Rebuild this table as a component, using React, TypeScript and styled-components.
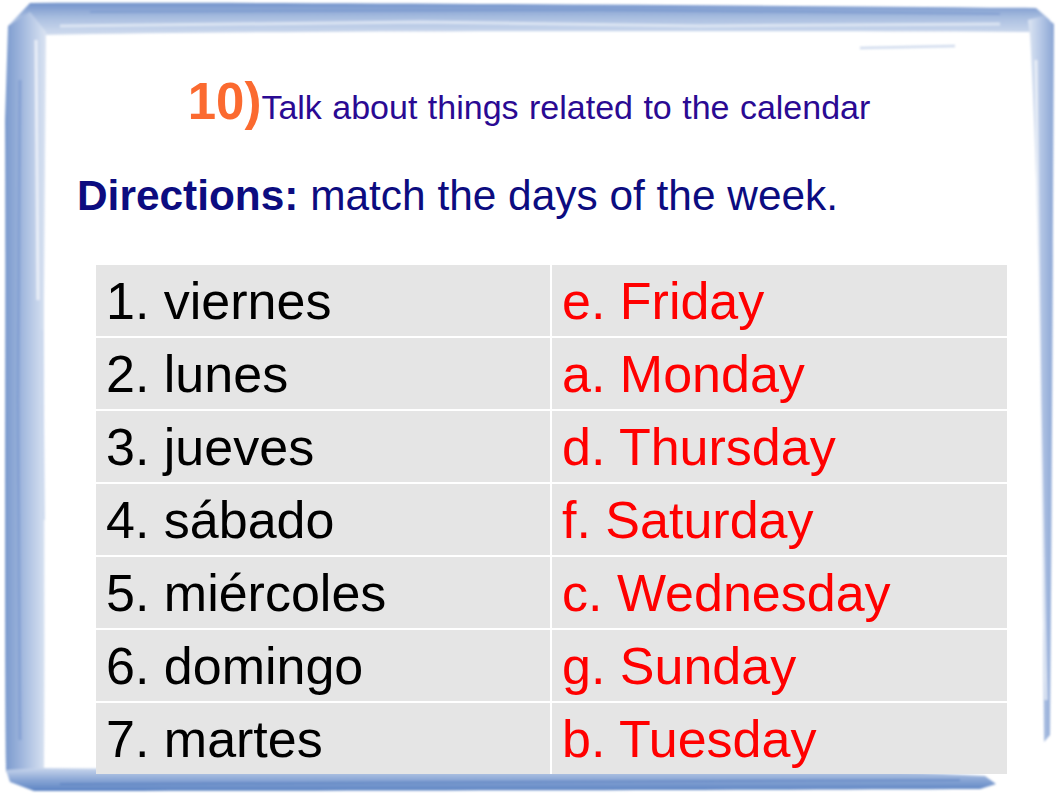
import React from "react";
import styled, { createGlobalStyle } from "styled-components";

const Global = createGlobalStyle`
  html, body { margin: 0; padding: 0; background: #ffffff; }
  body { font-family: "Liberation Sans", Arial, sans-serif; }
`;

const Slide = styled.div`
  position: relative;
  width: 1058px;
  height: 793px;
  overflow: hidden;
  background: #ffffff;
`;

const FrameArt = styled.svg`
  position: absolute;
  inset: 0;
  width: 1058px;
  height: 793px;
  pointer-events: none;
`;

const Content = styled.div`
  position: relative;
  display: flex;
  flex-direction: column;
  padding-top: 77px;
`;

const Title = styled.h1`
  margin: 0;
  height: 50px;
  display: flex;
  justify-content: center;
  align-items: baseline;
  font-weight: normal;
  line-height: 50px;
`;

const Number = styled.span`
  font-size: 51px;
  font-weight: bold;
  color: #fb6a30;
`;

const Topic = styled.span`
  font-size: 34px;
  color: #2a0a93;
  word-spacing: 1px;
`;

const Directions = styled.p`
  margin: 48px 0 0 77px;
  font-size: 42.4px;
  line-height: 42px;
  height: 42px;
  color: #0c0c80;
  white-space: nowrap;
`;

const Label = styled.b`
  font-weight: bold;
`;

const Table = styled.div`
  margin: 48px 0 0 96px;
  width: 911px;
  display: grid;
  grid-template-columns: 454px 455px;
  grid-auto-rows: 71px;
  gap: 2px;
  background: #ffffff;
`;

const Cell = styled.div<{ $answer?: boolean }>`
  background: #e5e5e5;
  font-size: 52px;
  line-height: 71px;
  padding: 1px 0 0 10px;
  color: ${(p) => (p.$answer ? "#ff0000" : "#000000")};
  white-space: nowrap;
  box-sizing: border-box;
`;

const rows: [string, string][] = [
  ["1. viernes", "e. Friday"],
  ["2. lunes", "a. Monday"],
  ["3. jueves", "d. Thursday"],
  ["4. sábado", "f. Saturday"],
  ["5. miércoles", "c. Wednesday"],
  ["6. domingo", "g. Sunday"],
  ["7. martes", "b. Tuesday"],
];

function Frame() {
  return (
    <FrameArt viewBox="0 0 1058 793">
      <defs>
        <linearGradient id="gTop" x1="0" y1="0" x2="0" y2="1">
          <stop offset="0" stopColor="#7393cb" />
          <stop offset="0.45" stopColor="#a9bee0" />
          <stop offset="1" stopColor="#d3deef" />
        </linearGradient>
        <linearGradient id="gLeft" x1="0" y1="0" x2="1" y2="0">
          <stop offset="0" stopColor="#7a99cd" />
          <stop offset="0.4" stopColor="#9fb6dd" />
          <stop offset="1" stopColor="#dbe4f2" />
        </linearGradient>
        <linearGradient id="gBottom" x1="0" y1="0" x2="0" y2="1">
          <stop offset="0" stopColor="#c9d6ec" />
          <stop offset="0.5" stopColor="#8ca8d6" />
          <stop offset="1" stopColor="#5b82c2" />
        </linearGradient>
        <linearGradient id="gRight" x1="0" y1="0" x2="1" y2="0">
          <stop offset="0" stopColor="#dde6f3" />
          <stop offset="0.5" stopColor="#b4c6e5" />
          <stop offset="1" stopColor="#8aa5d4" />
        </linearGradient>
        <filter id="soft" x="-5%" y="-5%" width="110%" height="110%">
          <feGaussianBlur stdDeviation="0.8" />
        </filter>
      </defs>
      <g filter="url(#soft)">
        <path
          d="M30 3 C300 2 700 5 1036 8 L1050 20 L1044 34 L1030 32 C700 31 300 30 44 35 L26 36 L8 26 Z"
          fill="url(#gTop)"
        />
        <path
          d="M8 26 L30 12 L46 32 L44 300 C44 500 45 650 44 770 L30 776 L6 772 C4 600 6 300 5 120 Z"
          fill="url(#gLeft)"
        />
        <path
          d="M6 770 L44 768 C300 771 700 771 900 772 L985 776 L996 784 L980 789 C700 790 300 791 34 791 L10 782 Z"
          fill="url(#gBottom)"
        />
        <path
          d="M1028 20 L1044 16 L1054 24 C1053 200 1052 500 1050 735 L1044 742 C1042 500 1040 200 1030 36 Z"
          fill="url(#gRight)"
        />
        <path d="M60 26 L420 22 L700 26 L1000 24" stroke="#e4ebf6" strokeWidth="3" fill="none" opacity="0.8" />
        <path d="M90 12 L600 10 L1000 14" stroke="#6d8fc9" strokeWidth="2" fill="none" opacity="0.5" />
        <path d="M20 80 L18 400 L20 740" stroke="#6d8fc9" strokeWidth="3" fill="none" opacity="0.45" />
        <path d="M36 40 L38 300" stroke="#f2f5fb" strokeWidth="3" fill="none" opacity="0.8" />
        <path d="M42 330 L44 520" stroke="#c8d5ec" strokeWidth="2" fill="none" opacity="0.7" />
        <path d="M860 48 L955 46" stroke="#c6d3ea" strokeWidth="2.5" fill="none" opacity="0.8" />
        <path d="M1036 60 L1040 400 L1046 700" stroke="#ffffff" strokeWidth="3" fill="none" opacity="0.6" />
        <path d="M60 784 L500 782 L960 780" stroke="#4f78bb" strokeWidth="2" fill="none" opacity="0.5" />
      </g>
    </FrameArt>
  );
}

export default function App() {
  return (
    <>
      <Global />
      <Slide>
        <Frame />
        <Content>
          <Title>
            <Number>10)</Number>
            <Topic>Talk about things related to the calendar</Topic>
          </Title>
          <Directions>
            <Label>Directions:</Label> match the days of the week.
          </Directions>
          <Table>
            {rows.map(([es, en]) => (
              <React.Fragment key={es}>
                <Cell>{es}</Cell>
                <Cell $answer>{en}</Cell>
              </React.Fragment>
            ))}
          </Table>
        </Content>
      </Slide>
    </>
  );
}
